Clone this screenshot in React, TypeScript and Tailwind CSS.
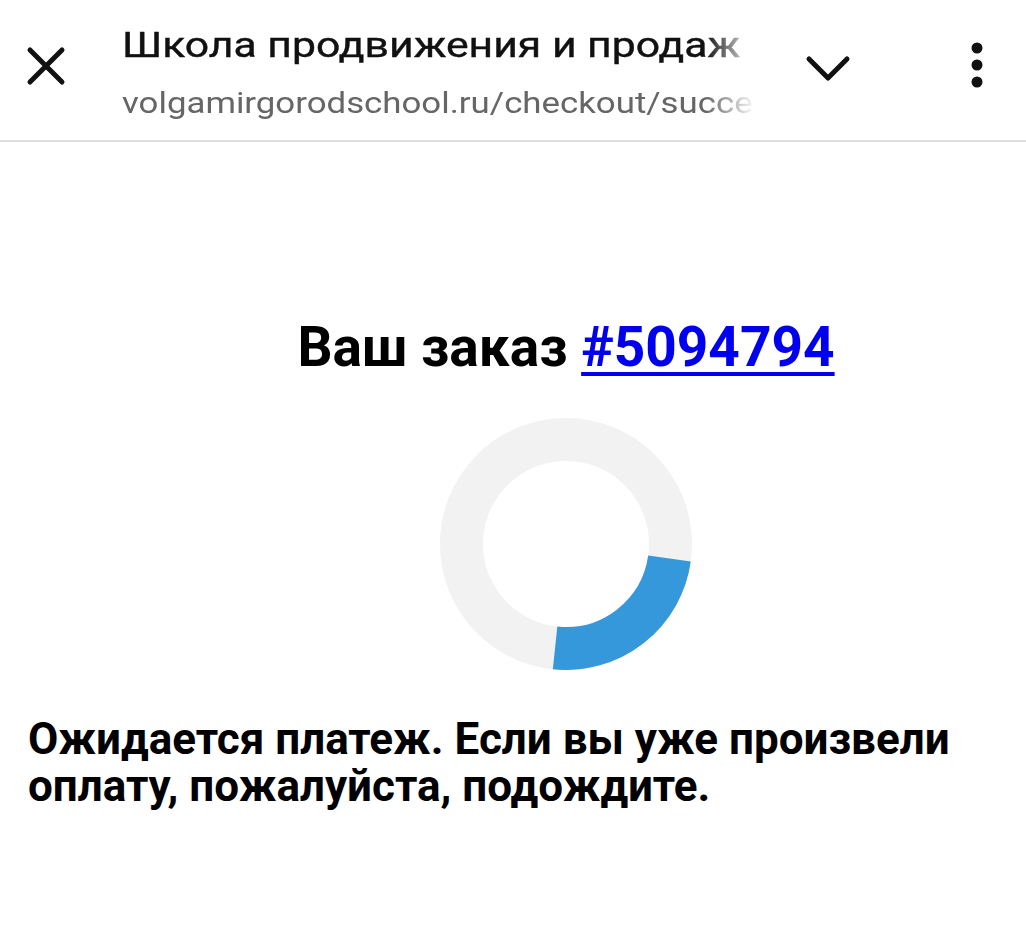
import React from 'react';

const Spinner: React.FC = () => {
  const c = 126;
  const r = 104.5;
  const start = (8 * Math.PI) / 180;
  const end = (96 * Math.PI) / 180;
  const x1 = c + r * Math.cos(start);
  const y1 = c + r * Math.sin(start);
  const x2 = c + r * Math.cos(end);
  const y2 = c + r * Math.sin(end);
  return (
    <svg width="252" height="252" viewBox="0 0 252 252">
      <circle cx={c} cy={c} r={r} fill="none" stroke="#f2f2f2" strokeWidth="43" />
      <path d={`M ${x1} ${y1} A ${r} ${r} 0 0 1 ${x2} ${y2}`} fill="none" stroke="#3498db" strokeWidth="43" />
    </svg>
  );
};

const App: React.FC = () => {
  return (
    <div className="flex flex-col w-[1026px] h-[934px] bg-white font-['Roboto',sans-serif] overflow-hidden">
      <header className="h-[142px] shrink-0 border-b-2 border-[#dedede] flex items-center">
        <button className="w-[92px] flex items-center justify-center -mt-[8px]">
          <svg width="40" height="40" viewBox="0 0 40 40">
            <path d="M4 4 L36 36 M36 4 L4 36" stroke="#111" strokeWidth="5" strokeLinecap="round" />
          </svg>
        </button>
        <div className="self-start pt-[25px] ml-[30px] w-[634px] overflow-hidden [mask-image:linear-gradient(to_right,black_92%,transparent_100%)]">
          <div className="origin-left scale-x-[1.22] text-[35px] leading-[42px] text-[#111] whitespace-nowrap [-webkit-text-stroke:0.4px_#111]">
            Школа продвижения и продаж
          </div>
          <div className="origin-left scale-x-[1.16] mt-[18px] text-[30px] leading-[36px] text-[#666] whitespace-nowrap">
            volgamirgorodschool.ru/checkout/success
          </div>
        </div>
        <div className="w-[144px] flex justify-center -mt-[2px]">
          <svg width="46" height="28" viewBox="0 0 46 28">
            <path d="M4 4 L23 23 L42 4" fill="none" stroke="#111" strokeWidth="5" strokeLinecap="round" strokeLinejoin="round" />
          </svg>
        </div>
        <div className="flex-1 flex justify-center pl-[28px] -mt-[10px]">
          <svg width="14" height="46" viewBox="0 0 14 46">
            <circle cx="7" cy="6" r="5.5" fill="#111" />
            <circle cx="7" cy="23" r="5.5" fill="#111" />
            <circle cx="7" cy="40" r="5.5" fill="#111" />
          </svg>
        </div>
      </header>
      <main className="flex flex-col">
        <div className="flex flex-col items-center pl-[106px] pt-[170px]">
          <h1 className="text-[55px] leading-[70px] font-bold text-black whitespace-nowrap">
            Ваш заказ{' '}
            <a href="#" className="text-[#0000ee] underline decoration-[4px] underline-offset-[6px]">
              #5094794
            </a>
          </h1>
          <div className="mt-[36px]">
            <Spinner />
          </div>
        </div>
        <p className="px-[28px] mt-[46px] text-[44px] leading-[47px] font-bold text-black">
          Ожидается платеж. Если вы уже произвели оплату, пожалуйста, подождите.
        </p>
      </main>
    </div>
  );
};

export default App;
